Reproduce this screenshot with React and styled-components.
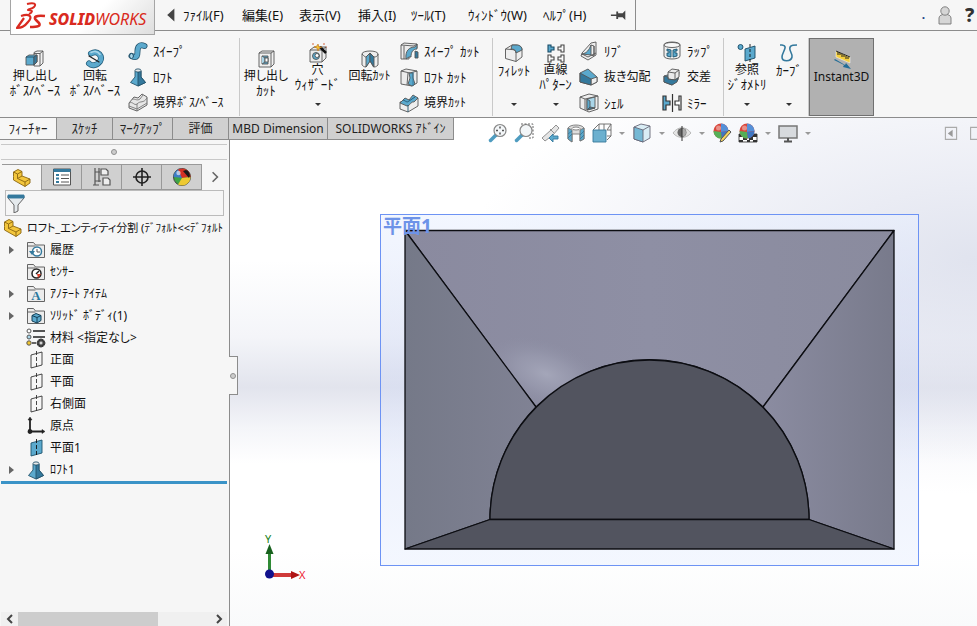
import styled, { createGlobalStyle, css } from "styled-components";

const GlobalStyle = createGlobalStyle`
    * {
        box-sizing: border-box;
    }
    body {
        margin: 0;
        overflow: hidden;
        background: #f6f6f6;
        color: #111;
        font: 12px/14px "Noto Sans", "Noto Sans CJK JP", sans-serif;
        font-feature-settings: "palt";
    }
    button, input {
        font: inherit;
        color: inherit;
        margin: 0;
    }
`;

const line = "#8c8c8c";

const Page = styled.div`
    display: flex;
    flex-direction: column;
    min-height: 100vh;
`;

/* ---------- menu bar ---------- */

const MenuBar = styled.header`
    display: flex;
    height: 31px;
    padding-left: 10px;
    border-bottom: 1px solid ${line};
`;

const Logo = styled.div`
    position: relative;
    z-index: 1;
    display: flex;
    align-items: center;
    flex: none;
    width: 145px;
    height: 35px;
    padding: 0 5px;
    gap: 2px;
    border: 1px solid #a5a5a5;
    border-top: 0;
    background: linear-gradient(135deg, #fff 55%, #dedede);
    color: #d92a20;
    font-size: 16px;
    line-height: 20px;
    font-style: italic;
`;

const LogoBold = styled.b`
    font-weight: 800;
`;

const LogoText = styled.span`
    padding-top: 4px;
    white-space: nowrap;
`;

const Menus = styled.nav`
    display: flex;
    align-items: center;
    width: 481px;
    padding-left: 6px;
    border-right: 1px solid ${line};
`;

const MenuItem = styled.button`
    flex: none;
    width: ${(p) => p.$width}px;
    padding: 0;
    border: 0;
    background: none;
    font-size: 13px;
    line-height: 16px;
    text-align: left;
    white-space: nowrap;
`;

const IconButton = styled.button`
    display: flex;
    align-items: center;
    justify-content: center;
    flex: none;
    width: ${(p) => p.$width || 22}px;
    padding: 0;
    border: 0;
    background: none;
`;

const MenuRight = styled.div`
    display: flex;
    align-items: center;
    gap: 11px;
    margin-left: auto;
    color: #1c4587;
    font-weight: 700;
`;

const HelpButton = styled(IconButton)`
    justify-content: flex-start;
    overflow: hidden;
    color: #333;
    font-size: 19px;
    line-height: 24px;
    font-weight: 800;
`;

/* ---------- ribbon ---------- */

const Ribbon = styled.div`
    display: flex;
    height: 87px;
    padding: 7px 0 1px 5px;
    border-bottom: 1px solid ${line};
`;

const Group = styled.div`
    display: flex;
    border-right: 1px solid #c9c9c9;
`;

const BigButton = styled.button`
    position: relative;
    display: flex;
    flex-direction: column;
    align-items: center;
    flex: none;
    width: ${(p) => p.$width}px;
    padding: ${(p) => (p.$menu ? 5 : 11)}px 0 0;
    border: 0;
    background: none;
    white-space: nowrap;
    ${(p) => p.$pressed && css`
        border: 1px solid #707070;
        background: #b1b1b1;
    `}
`;

const BigCaret = styled.span`
    position: absolute;
    bottom: 10px;
    border: 3px solid transparent;
    border-top-color: #333;
    border-bottom: 0;
`;

const Caption = styled.span`
    font-size: ${(p) => (p.$kana ? 13 : 12)}px;
`;

const SmallColumn = styled.div`
    display: flex;
    flex-direction: column;
    flex: none;
    width: ${(p) => p.$width}px;
    padding-left: 3px;
`;

const SmallButton = styled.button`
    display: flex;
    align-items: center;
    gap: 5px;
    height: 26px;
    padding: 0;
    border: 0;
    background: none;
    white-space: nowrap;
`;

/* ---------- workspace ---------- */

const Workspace = styled.main`
    display: flex;
    flex-direction: column;
    flex: 1;
    background:
        radial-gradient(ellipse 52% 46% at 100% 28%, rgba(214, 218, 233, 0.75), rgba(222, 225, 238, 0.5) 45%, transparent),
        linear-gradient(180deg, #fff 28%, #f4f5f9 43%, #e2e4ed 53%, #f4f5f9 61%, #fff 68%, #fff 85%, #f9fafb);
`;

const TopRow = styled.div`
    display: flex;
    height: 22px;
`;

const Tab = styled.button`
    flex: none;
    width: ${(p) => p.$width}px;
    padding: 0;
    border: 0;
    border-right: 1px solid ${line};
    border-bottom: 1px solid ${line};
    background: ${(p) => (p.$active ? "#f6f6f6" : "#d0d0d0")};
    color: #222;
    white-space: nowrap;
`;

const ViewTools = styled.div`
    display: flex;
    align-items: center;
    padding: 8px 0 0 31px;
`;

const ViewCaret = styled.span`
    width: 6px;
    margin: 0 4px;
    border: 3px solid transparent;
    border-top-color: #999;
    border-bottom: 0;
`;

const PaneButtons = styled.div`
    display: flex;
    gap: 10px;
    margin: 7px 0 0 auto;
    overflow: hidden;
    width: 34px;
    height: 16px;
`;

const Main = styled.div`
    display: flex;
    flex: 1;
`;

const Panel = styled.aside`
    position: relative;
    display: flex;
    flex-direction: column;
    flex: none;
    width: 230px;
    padding: 4px 2px 0 1px;
    border-right: 1px solid ${line};
    background: #f6f6f6;
`;

const Splitter = styled.div`
    display: flex;
    align-items: center;
    justify-content: center;
    height: 16px;
    border: 1px solid #c8c8c8;
    border-width: 1px 0;
`;

const Dot = styled.span`
    width: 6px;
    height: 6px;
    border: 1px solid #909090;
    border-radius: 50%;
    background: #ccc;
`;

const PanelTabs = styled.div`
    display: flex;
    height: 26px;
    margin-top: 4px;
    padding-left: 1px;
`;

const PanelTab = styled(IconButton)`
    border: 1px solid #999;
    border-left: 0;
    background: #d0d0d0;
    ${(p) => p.$active && css`
        border-bottom: 0;
        background: #f6f6f6;
    `}
`;

const Filter = styled.label`
    display: flex;
    align-items: center;
    height: 26px;
    margin: 0 3px 1px 4px;
    border: 1px solid #bbb;
`;

const FilterInput = styled.input`
    flex: 1;
    min-width: 0;
    height: 20px;
    padding: 0 4px;
    border: 0;
    outline: 0;
    background: none;
`;

const Tree = styled.ul`
    margin: 0;
    padding: 0;
    list-style: none;
    overflow: hidden;
    border-bottom: 3px solid #3a93c7;
`;

const TreeRow = styled.li`
    display: flex;
    align-items: center;
    gap: 4px;
    height: 22px;
    padding-left: ${(p) => (p.$root ? 2 : 8)}px;
    font-size: ${(p) => (p.$root ? 11 : 12)}px;
    white-space: nowrap;
`;

const Expander = styled.span`
    flex: none;
    width: 13px;
    height: 8px;

    &::before {
        content: "";
        display: ${(p) => (p.$shown ? "block" : "none")};
        width: 5px;
        height: 8px;
        background: #666;
        clip-path: polygon(0 0, 100% 50%, 0 100%);
    }
`;

const ScrollBar = styled.div`
    display: flex;
    align-items: center;
    height: 14px;
    margin-top: auto;
    background: #f0f0f0;
`;

const ScrollThumb = styled.div`
    width: 140px;
    height: 14px;
    margin-right: auto;
    background: #cdcdcd;
`;

const Handle = styled.button`
    position: absolute;
    top: 216px;
    left: 229px;
    display: flex;
    align-items: center;
    justify-content: center;
    width: 9px;
    height: 39px;
    padding: 0;
    border: 1px solid ${line};
    border-left: 0;
    background: #f6f6f6;
`;

const Viewport = styled.div`
    flex: 1;
    min-width: 0;
`;

const Scene = styled.svg`
    display: block;
    width: 100%;
`;

const Svg = styled.svg`
    flex: none;
    display: block;
`;

const B = "#5ba9cd";
const D = "#34799d";
const L = "#a9d5e8";
const G = "#e6e6e6";
const K = "#555";

const outline = { stroke: K, strokeWidth: 0.9, strokeLinejoin: "round" };

const planePath = "M5 5 16 2v13L5 18z";
const ball = (
    <g>
        <circle cx="9" cy="8" r="7.5" fill="#d9463b" />
        <path d="M9 .5A7.5 7.5 0 0 1 16.500 8L9 9z" fill="#5590d8" />
        <path d="M1.500 8 9 9l1 6.500A7.500 7.500 0 0 1 1.500 8z" fill="#55af57" />
        <path d="M9 9l7.500-1a7.500 7.500 0 0 1-6.500 7.500z" fill="#3f77c4" />
        <circle cx="6.500" cy="5" r="2.500" fill="#fff" opacity=".4" />
    </g>
);
const folder = <path {...outline} d="M1.500 17.500V2.500h6l2 2.500h9v12.500zM1.500 6h8" fill="#ececec" />;
const part = (
    <g stroke="#8a6510" strokeWidth=".9" strokeLinejoin="round">
        <path d="M1.500 8.500V4L6 1.500 10 3.500V8l8 3v4l-5 3.500L1.500 12z" fill="#f3c63c" />
        <path d="M1.500 4l4 2L10 3.500M5.500 6v4.500L13 14l5-3M13 14v4.500M5.500 10.500L10 8" fill="none" />
    </g>
);
const loft = (
    <g {...outline} stroke="#24536c">
        <path d="M7 4v6L2.500 15.500 10 19l7.500-3.500L13 10V4z" fill={B} />
        <path d="M10 5v14l7.500-3.500L13 10V4z" fill={D} />
        <ellipse cx="10" cy="3.500" rx="3" ry="1.600" fill="#e8e8e8" />
    </g>
);
const magnifier = (
    <g>
        <path d="M8 12 2.500 17.500" stroke="#4f9cc0" strokeWidth="3.500" strokeLinecap="round" />
        <circle cx="12" cy="7.500" r="6" fill="#f3f6f8" stroke="#888" strokeWidth="1.200" />
    </g>
);

const shapes = {
    extrude: <g {...outline}><path d="M9 3.500 12 2h6v12l-3 3H9z" fill="#f2f2f2" /><path d="M15 4.500 18 2M15 4.500V17M9 4.500h6" fill="none" /><path d="M1 8l3-2h8v7l-3 3H1z" fill={B} /><path d="M1 8h8l3-2M9 8v8" fill="none" stroke="#174964" /><path d="M9 8l3-2v7l-3 3z" fill={D} /></g>,
    revolve: <g strokeLinecap="round"><path d="M6 4.500c7-4 12 3 9 8-3 4-8 5-11 2" fill="none" stroke="#225c7a" strokeWidth="6" /><path d="M6 4.500c7-4 12 3 9 8-3 4-8 5-11 2" fill="none" stroke={B} strokeWidth="4.500" /><path d="M6 3.500c4-2 7-1 9 2" stroke={L} fill="none" strokeWidth="1.500" /><path d="M4 7l10 6" stroke="#222" strokeWidth="1.200" /></g>,
    sweep: <g fill="none" strokeLinecap="round"><path d="M3.500 15c6 3 6-1 6-5s2-7 7-5" stroke="#24536c" strokeWidth="6" /><path d="M3.500 15c6 3 6-1 6-5s2-7 7-5" stroke={B} strokeWidth="4.500" /><ellipse cx="3.500" cy="15" rx="2" ry="2.500" fill={L} stroke="#24536c" /></g>,
    loft,
    boundary: <g {...outline}><path d="M1 10l5-6 4 1 4-4 5 3v8l-10 6-8-3z" fill={G} /><path d="M1 10c4-2 5 3 8 1 4-4 6 0 10-6M9 11v7M4 6c4 0 5 2 8 0l3-4M1 13l8 3 10-6" fill="none" stroke="#777" /></g>,
    cutExtrude: <g {...outline}><path d="M3 4l3-2h12v13l-3 3H3z" fill="#f0f0f0" /><path d="M3 4h12l3-2M15 4v14" fill="none" /><path d="M6 7h6v8H6z" fill={B} /><path d="M6 7l3 2v4l-3 2M9 9h3" fill={L} /><path d="M9 9h3v4H9z" fill="#fff" /></g>,
    hole: <g {...outline}><path d="M2 7l4-3h12v11l-4 4H2z" fill="#ececec" /><path d="M2 7h12l4-3M14 7v12" fill="none" /><circle cx="8" cy="13" r="3.500" fill={B} /><circle cx="9" cy="12.500" r="2" fill="#fff" /><path d="M12 4l6 6" stroke="#111" strokeWidth="2.500" /><path d="M10 1l1 3 3 0-3 1.500L10 8 9 5 6 4l3-1z" fill="#f2c230" stroke="#bf6e18" strokeWidth=".6" /><path d="M4 1h2M15 1h2M18 4h1" stroke="#d1582c" /></g>,
    cutRevolve: <g {...outline}><path d="M2 5c0-4 16-4 16 0v11c-2 2-3 2-4.500 2L10 12l-4 6c-2 0-3-1-4-2z" fill="#ededed" /><path d="M10 4L6 8v10l4-6z" fill={B} /><path d="M10 4l4 4v10l-4-6z" fill={D} /><path d="M2 5c2 2 3 3 4 3l4-4 4 4c2 0 4-1 4-3" fill="none" /></g>,
    cutSweep: <g {...outline}><path d="M2 4l3-2 13 1v4c-6 0-8 5-8 11H2z" fill="#ececec" /><path d="M7 18C6 10 10 6 16 6l2-3v5c-4 0-6 3-6 8h-2z" fill={B} /><path d="M2 4l13 1 3-2M5 5v13" fill="none" /><path d="M16 10l3 1v6h-3z" fill={D} /></g>,
    cutLoft: <g {...outline}><path d="M2 4l5-2 11 2v12l-5 3-11-2z" fill="#ececec" /><path d="M2 4l9 2 7-2M9 6l-1 12" fill="none" /><path d="M10 6h4v5l2 6-3 2-4-2 2-6z" fill={B} /><path d="M14 5v14" stroke={D} /></g>,
    cutBoundary: <g {...outline}><path d="M1 9l18-4v8l-10 6-8-3z" fill="#eee" /><path d="M1 10l5-5 4 2 4-5 5 3-4 4c-3-1-4 4-7 4z" fill={B} /><path d="M4 7c3 1 4 3 6 1l6-4M9 12v7" fill="none" stroke="#20536e" /></g>,
    fillet: <g {...outline}><path d="M1.500 6 8 2h4c4 0 6 2 6 5v7l-6 4.500-10.500-3z" fill="#eee" /><path d="M8 2h4c4 0 6 2 6 5l-6 3c0-3-2-4-5-4z" fill={B} /><path d="M1.500 6l5.500.5c4 0 5 2 5 4v8" fill="none" /></g>,
    pattern: <g fill="#fafafa" stroke="#444" strokeWidth="1.100"><path d="M2 2h3v2h3v3H5v2H2z" fill={B} stroke="#174964" /><path d="M18 2h-3v2h-3v3h3v2h3zM2 12h3v2h3v3H5v2H2zM18 12h-3v2h-3v3h3v2h3z" /></g>,
    rib: <g {...outline}><path d="M12 2l5-1v13l-8 5-7-4 1-3z" fill="#eee" /><path d="M12 4v10l-9-1C8 12 10 9 12 4z" fill={B} /><path d="M12 4l3 1v10l-3-1M3 13l6 3 8-4M15 5v9" fill="none" /></g>,
    draft: <g {...outline}><path d="M1 6l8-4 9 8v5l-6 3-11-3z" fill={B} /><path d="M12 12l6-2v5l-6 3z" fill="#eee" /><path d="M1 6l11 6v6L1 15z" fill={D} /></g>,
    shell: <g {...outline}><path d="M1 4l9-3 9 2v13l-9 3-9-4z" fill="#eee" /><path d="M1 4l5 2 13-3M6 6v11" fill="none" /><path d="M8 6l8-2v11l-8 2z" fill={L} /><path d="M8 6l3 2v6l-3 3z" fill={B} /><path d="M8 17l3-3 5 1z" fill={D} /></g>,
    wrap: <g {...outline}><path d="M2 4c0-4 16-4 16 0v11c0 4-16 4-16 0z" fill="#eee" /><ellipse cx="10" cy="4" rx="8" ry="2.500" fill="#f8f8f8" /><path d="M5 8l4 1v7l-4-1v-3h2v-2H5zM15 8l-4 1v7l4-1v-3h-2v-2h2z" fill={B} stroke="#1c526d" /></g>,
    intersect: <g {...outline}><path d="M2 9l7-2 8-2-1 8-6 5-8-3z" fill={B} /><path d="M6 5l4-3 7 1v7l-4 3-7-1z" fill="#eaeaea" /><path d="M6 5l7 1 4-3M13 6v7" fill="none" /><path d="M2 9l4 1v2l7 1 3-2-1 4-5 3-8-3z" fill={D} /></g>,
    mirror: <g stroke="#333" strokeWidth="1.200"><path d="M1 3h3v5h4v4H4v5H1z" fill={B} /><path d="M10.500 1v18" /><path d="M19 3h-2v5h-4v4h4v5h2z" fill="#fff" /></g>,
    reference: <g {...outline}><circle cx="3.500" cy="4" r="2.500" fill={B} stroke="#174964" /><path d="M8 6l10-3v12L8 18z" fill={B} stroke="#174964" /><path d="M13 1v18" stroke="#111" strokeDasharray="3 2" /></g>,
    curve: <path d="M1 2h2c7 1 0 7 0 12 0 5 9 5 10 0 1-4-5-8-1-11 1-1 3-1 6-1" fill="none" stroke={D} strokeWidth="1.600" />,
    instant: <g><path d="M4 1l14 6v6L4 7z" fill="#f6cf3d" stroke="#fff" strokeWidth=".5" /><path d="M4 1l14 6M6 2v3M8 3v2M10 4v3M12 5v2M14 6v3M16 7v2" stroke="#222" /><path d="M2 10l10 5-1 2 8 2-5-6-1 2L3 9z" fill="#236d97" /></g>,
    pin: <g fill="#444"><path d="M1 9.500h7v1.500H1zM7 6h2v8.500H7zM9 8h5v4.500H9zM14 8l3-3v10.500l-3-3z" /></g>,
    user: <g {...outline} stroke="#777" fill="#d6d6d6"><path d="M4 19v-6c0-5 12-5 12 0v6z" /><circle cx="10" cy="6" r="4.200" /></g>,
    zoomFit: <g>{magnifier}<path d="M12 3.500v2M12 9.500v2M8 7.500h2M14 7.500h2" stroke="#555" strokeWidth="1.500" /></g>,
    zoomArea: <g>{magnifier}<path d="M7 1h12v14h-5" fill="none" stroke="#666" strokeDasharray="2 1.500" /></g>,
    previous: <g {...outline} stroke="#888"><path d="M2 15l9-8 5-5 3 3-6 7-8 6z" fill="#e5e5e5" /><path d="M10 6l4 4" /><path d="M18 13h-5v-2l-4 4 4 4v-3h5z" fill={B} stroke={D} /></g>,
    section: <g {...outline} stroke="#777"><path d="M2 5c2-4 14-4 16 0v11l-4 2v-7H6v8l-4-3z" fill="#ddd" /><path d="M2 5l4 2v12l-4-3zM14 7l4-2v11l-4 2z" fill={B} /><path d="M2 11l4-3M2 15l4-4M14 12l4-4M14 16l4-4" stroke={D} /><ellipse cx="10" cy="5.500" rx="4" ry="1.500" fill="#fff" /></g>,
    orient: <g {...outline} stroke="#666"><path d="M7 1h12v12h-4M1 7l6-6M15 7l4-6M12 1v6M19 7h-4M19 13l-4 4M7 1v6" fill="none" /><path d="M1 7h13v12H1z" fill="#6cb0cf" stroke="#39799a" /></g>,
    display: <g {...outline} stroke="#667"><path d="M2 4l7-3 9 2v12l-7 4-9-3z" fill="#d9edf5" /><path d="M2 4l9 3v12l-9-3z" fill="#75b8d4" /><path d="M11 7l7-4" fill="none" /></g>,
    eye: <g><path d="M1 10c5-7 13-7 18 0-5 6-13 6-18 0z" fill="#e4e4e4" stroke="#bbb" /><circle cx="10" cy="9.500" r="4.500" fill="#666" /><path d="M10 5.500a4 4 0 0 1 0 8z" fill="#aaa" /><path d="M10 3v15" stroke="#333" /></g>,
    appearance: <g>{ball}<path d="M19 9l-8 9-3 1 1-3 8-9z" fill="#f5d45d" stroke="#555" /></g>,
    sceneIcon: <g><path d="M1 11h18v8H1z" fill="#fff" stroke="#555" /><path d="M1 11h4v3H1zM14 11h5v3h-5zM5 14h4v3H5zM11 14h4v3h-4zM1 17h4v2H1zM9 17h3v2H9zM15 17h4v2h-4z" fill="#333" />{ball}</g>,
    monitor: <g><path d="M1 3h18v12H1z" fill="#d7dade" stroke="#777" strokeWidth="1.500" /><path d="M10 15v3M6 18.500h8" stroke="#555" strokeWidth="2" /></g>,
    part,
    list: <g><path d="M1.500 2h17v16h-17z" fill="#fff" stroke={K} /><path d="M1.500 2h17v3h-17z" fill={D} /><path d="M4 8h3M4 11.500h3M4 15h3" stroke={D} strokeWidth="2" /><path d="M9 8h8M9 11.500h8M9 15h8" stroke={K} /></g>,
    config: <g fill="#eee" stroke={K} strokeWidth="1.200"><path d="M3 1v17M3 5h5M3 14h6M1 18h6M7 1v14" fill="none" /><path d="M9 2h5l2 2v4H9zM11 11h5l2 2v5h-7z" /></g>,
    target: <g fill="none" stroke="#222" strokeWidth="1.600"><circle cx="10" cy="10" r="6" /><path d="M10 1v18M1 10h18" /></g>,
    ball: <g><circle cx="10" cy="10" r="8.500" fill="#3ea446" stroke="#444" /><path d="M1.500 10A8.500 8.500 0 0 1 10 1.500L11 11z" fill="#3e7cc6" /><path d="M6 2.500A8.500 8.500 0 0 1 18.500 10L10 11z" fill="#d33225" /><path d="M10 11l8.500-1A8.500 8.500 0 0 1 6 17.500z" fill="#edc932" /><path d="M11 4l6 7c2-3 0-7-3-8z" fill="#1b1b1b" /><circle cx="6.500" cy="6" r="2.200" fill="#fff" opacity=".6" /></g>,
    funnel: <g {...outline}><path d="M2 3h16v2l-6 7v6l-4 2v-8L2 5z" fill="#e5eaed" /><path d="M2 2h16v3H2z" fill={D} stroke={D} /></g>,
    history: <g>{folder}<circle cx="11" cy="11.500" r="4.500" fill="#fff" stroke={D} strokeWidth="1.500" /><path d="M11 9v3h3" stroke={K} fill="none" /><path d="M3 11h6l-3 4z" fill={D} /></g>,
    sensor: <g>{folder}<circle cx="10.500" cy="11.500" r="4.500" fill="#fff" stroke="#222" strokeWidth="1.500" /><path d="M10 12l3-3" stroke="#222" strokeWidth="1.500" /><path d="M11 12h4l-3 4z" fill="#e0402a" /></g>,
    note: <g>{folder}<text x="10" y="16" textAnchor="middle" fontFamily="Liberation Serif, serif" fontWeight="700" fontSize="13" fill="#2a789e">A</text></g>,
    bodies: <g>{folder}<path d="M6 9.500l4-2 5 2v5l-4 2.500-5-2z" fill={B} stroke="#123e56" /><path d="M6 9.500l5 2 4-2M11 11.500V17" fill="none" stroke="#123e56" /></g>,
    material: <g stroke={K}><path d="M7 3h12M7 9h12" strokeWidth="1.800" /><circle cx="3" cy="3" r="2" fill="#fff" /><circle cx="3" cy="9" r="2" fill={L} /><circle cx="3" cy="15" r="2.200" fill="#f0c530" /><circle cx="15" cy="15" r="3" fill="none" stroke="#333" strokeWidth="2.500" /><path d="M15 10.500v9M10.500 15h9M12 12l6 6M18 12l-6 6" /><path d="M6 15h4" strokeWidth="1.800" /><circle cx="15" cy="15" r="1" fill="#fff" stroke="none" /></g>,
    plane: <g fill="none" {...outline} stroke="#333"><path d={planePath} /><path d="M10.500 1v18" strokeDasharray="4 2" /></g>,
    origin: <g stroke="#222" strokeWidth="1.800" fill="#222"><path d="M4 4v11.500h12" fill="none" /><path d="M4 1l2 3H2zM19 15.500l-3 2v-4z" strokeWidth=".5" /><circle cx="4" cy="15.500" r="1.500" /></g>,
    bluePlane: <g {...outline} stroke="#1c526d"><path d={planePath} fill={B} /><path d="M10.500 1v18" stroke="#111" strokeDasharray="4 2" /></g>,
    left: <path d="M12 6 8 10l4 4" fill="none" stroke="#444" strokeWidth="2" />,
    right: <path d="M8 6l4 4-4 4" fill="none" stroke="#444" strokeWidth="2" />,
    chevron: <path d="M7 4l6 6-6 6" fill="none" stroke="#666" strokeWidth="2" />,
    back: <path d="M13 2v16L4 10z" fill="#444" />,
    paneLeft: <g><path d="M3 3h14v15H3z" fill="none" stroke="#aaa" strokeWidth="1.400" /><path d="M12 6v9l-6-4.500z" fill="#999" /></g>,
    pane: <path d="M2 3h16v15H2z" fill="none" stroke="#aaa" strokeWidth="1.400" />,
};

const Icon = ({ name, size = 20 }) => (
    <Svg width={size} height={size} viewBox="0 0 20 20" aria-hidden="true">
        {shapes[name]}
    </Svg>
);

const menus = [
    ["ﾌｧｲﾙ(F)", 59],
    ["編集(E)", 57],
    ["表示(V)", 59],
    ["挿入(I)", 53],
    ["ﾂｰﾙ(T)", 57],
    ["ｳｨﾝﾄﾞｳ(W)", 75],
    ["ﾍﾙﾌﾟ(H)", 65],
];

const ribbon = [
    {
        big: [
            { icon: "extrude", width: 60, text: ["押し出し", "ﾎﾞｽ/ﾍﾞｰｽ"] },
            { icon: "revolve", width: 60, text: ["回転", "ﾎﾞｽ/ﾍﾞｰｽ"] },
        ],
        small: [
            { width: 114, items: [["sweep", "ｽｲｰﾌﾟ"], ["loft", "ﾛﾌﾄ"], ["boundary", "境界ﾎﾞｽ/ﾍﾞｰｽ"]] },
        ],
    },
    {
        big: [
            { icon: "cutExtrude", width: 52, text: ["押し出し", "ｶｯﾄ"] },
            { icon: "hole", width: 51, text: ["穴", "ｳｨｻﾞｰﾄﾞ"], menu: true },
            { icon: "cutRevolve", width: 53, text: ["回転ｶｯﾄ"] },
        ],
        small: [
            { width: 96, items: [["cutSweep", "ｽｲｰﾌﾟ ｶｯﾄ"], ["cutLoft", "ﾛﾌﾄ ｶｯﾄ"], ["cutBoundary", "境界ｶｯﾄ"]] },
        ],
    },
    {
        big: [
            { icon: "fillet", width: 42, text: ["ﾌｨﾚｯﾄ"], menu: true },
            { icon: "pattern", width: 41, text: ["直線", "ﾊﾟﾀｰﾝ"], menu: true },
        ],
        small: [
            { width: 83, items: [["rib", "ﾘﾌﾞ"], ["draft", "抜き勾配"], ["shell", "ｼｪﾙ"]] },
            { width: 64, items: [["wrap", "ﾗｯﾌﾟ"], ["intersect", "交差"], ["mirror", "ﾐﾗｰ"]] },
        ],
    },
    {
        big: [
            { icon: "reference", width: 46, text: ["参照", "ｼﾞｵﾒﾄﾘ"], menu: true },
            { icon: "curve", width: 38, text: ["ｶｰﾌﾞ"], menu: true },
        ],
        small: [],
    },
];

const tabs = [
    ["ﾌｨｰﾁｬｰ", 57],
    ["ｽｹｯﾁ", 56],
    ["ﾏｰｸｱｯﾌﾟ", 60],
    ["評価", 56],
    ["MBD Dimension", 99],
    ["SOLIDWORKS ｱﾄﾞｲﾝ", 126],
];

const viewTools = [
    ["zoomFit"],
    ["zoomArea"],
    ["previous"],
    ["section"],
    ["orient", true],
    ["display", true],
    ["eye", true],
    ["appearance"],
    ["sceneIcon", true],
    ["monitor", true],
];

const tree = [
    ["history", "履歴", true],
    ["sensor", "ｾﾝｻｰ"],
    ["note", "ｱﾉﾃｰﾄ ｱｲﾃﾑ", true],
    ["bodies", "ｿﾘｯﾄﾞ ﾎﾞﾃﾞｨ(1)", true],
    ["material", "材料 <指定なし>"],
    ["plane", "正面"],
    ["plane", "平面"],
    ["plane", "右側面"],
    ["origin", "原点"],
    ["bluePlane", "平面1"],
    ["loft", "ﾛﾌﾄ1", true],
];

// half-width kana runs narrow, so labels made only of it are set a size up
const Label = ({ children }) => (
    <Caption $kana={/^[\uFF61-\uFF9F/ ]+$/.test(children)}>{children}</Caption>
);

const Brand = () => (
    <Logo>
        <Svg width="31" height="30" viewBox="0 0 31 30" fill="none" stroke="#d92a20" strokeLinejoin="round">
            <path d="M11 2c7-2 10 0 7 3-2 2-5 2-6 3 5 0 5 2 1 4" strokeWidth="2" />
            <path d="M5 14c9-3 12 1 7 6-3 4-7 6-11 6l7-10" strokeWidth="2.200" />
            <path d="M29 14c-9-1-12 1-9 4l3 3c2 3-1 4-9 4" strokeWidth="2.600" />
        </Svg>
        <LogoText><LogoBold>SOLID</LogoBold>WORKS</LogoText>
    </Logo>
);

const Model = () => (
    <Scene viewBox="230 140 747 486">
        <defs>
            <linearGradient id="top" x1="0" x2="1">
                <stop offset="0" stopColor="#8a8a9f" />
                <stop offset=".5" stopColor="#8e8fa4" />
                <stop offset="1" stopColor="#8a8b9e" />
            </linearGradient>
            <linearGradient id="left" x1="0" x2="1">
                <stop offset="0" stopColor="#757988" />
                <stop offset="1" stopColor="#808294" />
            </linearGradient>
            <linearGradient id="right" x1="0" x2="1">
                <stop offset="0" stopColor="#8b8ca1" />
                <stop offset="1" stopColor="#787a8b" />
            </linearGradient>
            <radialGradient id="shine" gradientUnits="userSpaceOnUse" cx="0" cy="0" r="1"
                gradientTransform="translate(546 374) rotate(20) scale(62 32)">
                <stop offset="0" stopColor="#a4a6b9" />
                <stop offset=".5" stopColor="#9c9eb2" stopOpacity=".6" />
                <stop offset="1" stopColor="#9092a7" stopOpacity="0" />
            </radialGradient>
            <linearGradient id="sheet" x1="0" y1="0" x2="0" y2="1">
                <stop offset="0" stopColor="#e9f0ff" stopOpacity=".55" />
                <stop offset=".45" stopColor="#cdd6f3" stopOpacity=".4" />
                <stop offset="1" stopColor="#e9f0ff" stopOpacity=".5" />
            </linearGradient>
        </defs>
        <rect x="380.500" y="214.500" width="538" height="351" fill="url(#sheet)" stroke="#6d93f4" />
        <g stroke="#0c0d12" strokeWidth="1.300" strokeLinejoin="round">
            <path d="M405 230.500H894L763 407A160 160 0 0 0 536 407z" fill="url(#top)" />
            <path d="M415 243L536 407A160 160 0 0 1 640 361L600 300z" fill="url(#shine)" stroke="none" />
            <path d="M405 230.500L536 407A160 160 0 0 0 490 519.500L405 549z" fill="url(#left)" />
            <path d="M894 230.500L763 407A160 160 0 0 1 809 519.500L894 549z" fill="url(#right)" />
            <path d="M490 519.500A159.500 159.500 0 0 1 809 519.500z" fill="#52545f" />
            <path d="M490 519.500H809L894 549H405z" fill="#52545f" />
        </g>
        <text x="383" y="233" fill="#6d93e8" fontSize="19" fontWeight="700">平面1</text>
        <path d="M269.500 572V552" stroke="#2f8a35" strokeWidth="3" />
        <path d="M269.500 544l4 10h-8z" fill="#17601d" />
        <path d="M272 575h20" stroke="#cf3a3a" strokeWidth="4" />
        <path d="M300 575l-9 4v-8z" fill="#b01515" />
        <circle cx="269.500" cy="574" r="4.500" fill="#11118c" />
        <text x="265" y="543" fill="#188018" fontSize="11">Y</text>
        <text x="299" y="579" fill="#ee2233" fontSize="11">X</text>
    </Scene>
);

const App = () => (
    <Page>
        <GlobalStyle />
        <MenuBar>
            <Brand />
            <Menus>
                <IconButton aria-label="戻る"><Icon name="back" size={16} /></IconButton>
                {menus.map(([text, width]) => (
                    <MenuItem key={text} $width={width}>{text}</MenuItem>
                ))}
                <IconButton aria-label="ピン"><Icon name="pin" size={18} /></IconButton>
            </Menus>
            <MenuRight>
                <span>.</span>
                <IconButton $width={18} aria-label="ユーザー"><Icon name="user" /></IconButton>
                <HelpButton $width={12}>?</HelpButton>
            </MenuRight>
        </MenuBar>

        <Ribbon>
            {ribbon.map((group, i) => (
                <Group key={i}>
                    {group.big.map((item) => (
                        <BigButton key={item.icon} $width={item.width} $menu={item.menu}>
                            <Icon name={item.icon} />
                            {item.text.map((row) => <Label key={row}>{row}</Label>)}
                            {item.menu && <BigCaret />}
                        </BigButton>
                    ))}
                    {group.small.map((column, j) => (
                        <SmallColumn key={j} $width={column.width}>
                            {column.items.map(([icon, text]) => (
                                <SmallButton key={icon}>
                                    <Icon name={icon} />
                                    <Label>{text}</Label>
                                </SmallButton>
                            ))}
                        </SmallColumn>
                    ))}
                </Group>
            ))}
            <BigButton $width={65} $pressed>
                <Icon name="instant" />
                <Label>Instant3D</Label>
            </BigButton>
        </Ribbon>

        <Workspace>
            <TopRow>
                {tabs.map(([text, width], i) => (
                    <Tab key={text} $width={width} $active={i === 0}><Label>{text}</Label></Tab>
                ))}
                <ViewTools>
                    {viewTools.map(([icon, menu]) => [
                        <IconButton key={icon} $width={26} aria-label={icon}><Icon name={icon} /></IconButton>,
                        menu && <ViewCaret key={icon + "-menu"} />,
                    ])}
                </ViewTools>
                <PaneButtons>
                    <Icon name="paneLeft" size={16} />
                    <Icon name="pane" size={16} />
                </PaneButtons>
            </TopRow>
            <Main>
                <Panel>
                    <Splitter><Dot /></Splitter>
                    <PanelTabs>
                        {["part", "list", "config", "target", "ball"].map((name, i) => (
                            <PanelTab key={name} $width={40} $active={i === 0} aria-label={name}>
                                <Icon name={name} />
                            </PanelTab>
                        ))}
                        <IconButton $width={26} aria-label="次へ"><Icon name="chevron" size={16} /></IconButton>
                    </PanelTabs>
                    <Filter>
                        <Icon name="funnel" />
                        <FilterInput aria-label="フィルター" />
                    </Filter>
                    <Tree>
                        <TreeRow $root>
                            <Icon name="part" />
                            ロフト_エンティティ分割 (ﾃﾞﾌｫﾙﾄ&lt;&lt;ﾃﾞﾌｫﾙﾄ
                        </TreeRow>
                        {tree.map(([icon, text, expandable]) => (
                            <TreeRow key={text}>
                                <Expander $shown={expandable} />
                                <Icon name={icon} />
                                {text}
                            </TreeRow>
                        ))}
                    </Tree>
                    <ScrollBar>
                        <IconButton $width={17} aria-label="左"><Icon name="left" /></IconButton>
                        <ScrollThumb />
                        <IconButton $width={17} aria-label="右"><Icon name="right" /></IconButton>
                    </ScrollBar>
                    <Handle aria-label="パネルを閉じる"><Dot /></Handle>
                </Panel>
                <Viewport><Model /></Viewport>
            </Main>
        </Workspace>
    </Page>
);

export default App;
